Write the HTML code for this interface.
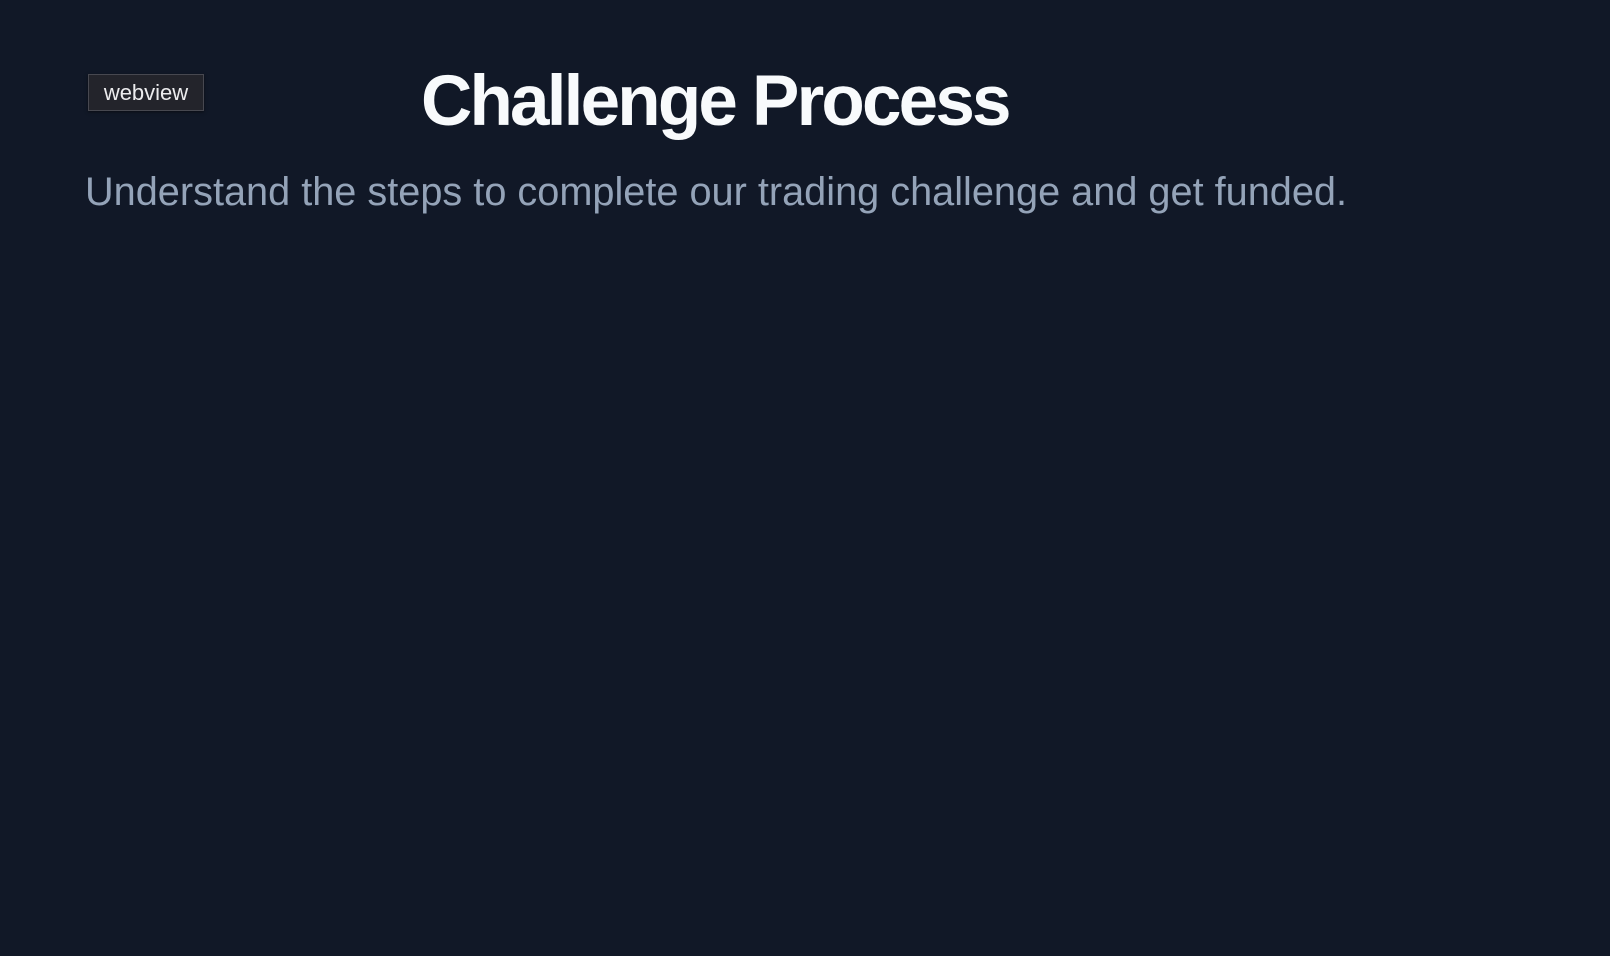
<!DOCTYPE html>
<html><head><style>
html,body{margin:0;padding:0;width:1610px;height:956px;background:#111827;overflow:hidden;font-family:"Liberation Sans",sans-serif}
.badge{position:absolute;left:88px;top:74px;width:116px;height:37px;box-sizing:border-box;background:#23242b;border:1px solid #474850;color:#ececee;font-size:22px;line-height:35px;text-align:center;box-shadow:0 1px 3px rgba(0,0,0,.5)}
h1{position:absolute;left:421px;margin:0;font-size:71px;font-weight:bold;color:#f8fafc;letter-spacing:-2.8px;line-height:1;top:66px;white-space:nowrap}
p{position:absolute;left:85px;top:169px;margin:0;font-size:39.7px;color:#94a3b8;white-space:nowrap;line-height:1.2}
</style></head><body>
<div class="badge">webview</div>
<h1>Challenge Process</h1>
<p>Understand the steps to complete our trading challenge and get funded.</p>
</body></html>
